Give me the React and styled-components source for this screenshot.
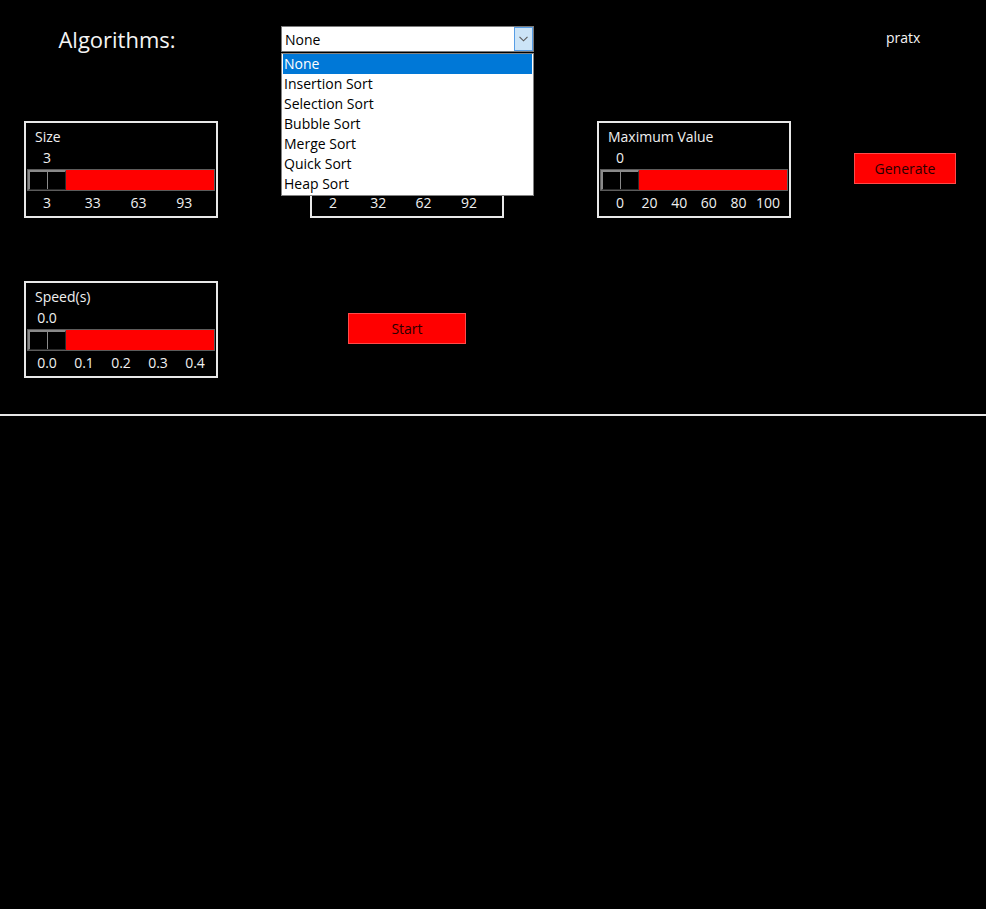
import React from "react";
import styled, { createGlobalStyle } from "styled-components";

const GlobalStyle = createGlobalStyle`
  html, body {
    margin: 0;
    padding: 0;
    background: #000;
  }
  body {
    font-family: "Open Sans", "Noto Sans", sans-serif;
    font-size: 14px;
    color: #f0f0f0;
  }
`;

const algorithms = [
  "None",
  "Insertion Sort",
  "Selection Sort",
  "Bubble Sort",
  "Merge Sort",
  "Quick Sort",
  "Heap Sort",
];

// scale geometry (matches the Tk scale: 38px slider, 186px trough)
const TROUGH_INNER = 186;
const THUMB = 38;
const USABLE = TROUGH_INNER - THUMB;

const posOf = (v, min, max) => THUMB / 2 + ((v - min) / (max - min)) * USABLE;

const Scale = ({ label, min, max, value, ticks, fmt = (v) => v }) => (
  <ScaleFrame>
    <ScaleLabel>{label}</ScaleLabel>
    <ValueRow>
      <Floating style={{ left: posOf(value, min, max) }}>{fmt(value)}</Floating>
    </ValueRow>
    <Trough>
      <Thumb style={{ left: posOf(value, min, max) - THUMB / 2 }} />
    </Trough>
    <TickRow>
      {ticks.map((t) => (
        <Floating key={t} style={{ left: posOf(t, min, max) }}>
          {fmt(t)}
        </Floating>
      ))}
    </TickRow>
  </ScaleFrame>
);

const App = () => {
  return (
    <>
      <GlobalStyle />
      <Page>
        <TopBar>
          <Title>Algorithms:</Title>
          <ComboWrap>
            <Combo>
              <ComboText>None</ComboText>
              <ComboArrow>
                <svg width="9" height="6" viewBox="0 0 9 6">
                  <path d="M0.5 0.8 L4.5 4.8 L8.5 0.8" fill="none" stroke="#5a5a5a" strokeWidth="1.1" />
                </svg>
              </ComboArrow>
            </Combo>
            <DropList>
              {algorithms.map((a, i) => (
                <DropItem key={a} $active={i === 0}>
                  {a}
                </DropItem>
              ))}
            </DropList>
          </ComboWrap>
          <span />
          <User>pratx</User>
        </TopBar>

        <Controls>
          <Scale label="Size" min={3} max={100} value={3} ticks={[3, 33, 63, 93]} />
          <Scale label="Minimum Value" min={2} max={100} value={2} ticks={[2, 32, 62, 92]} />
          <Scale label="Maximum Value" min={0} max={100} value={0} ticks={[0, 20, 40, 60, 80, 100]} />
          <RedButton $offset={38} $width={102}>Generate</RedButton>

          <Scale
            label="Speed(s)"
            min={0}
            max={0.4}
            value={0}
            ticks={[0, 0.1, 0.2, 0.3, 0.4]}
            fmt={(v) => v.toFixed(1)}
          />
          <RedButton $width={118}>Start</RedButton>
        </Controls>

        <Divider />
        <Canvas />
      </Page>
    </>
  );
};

// styles
const Page = styled.div`
  width: 986px;
  height: 909px;
  overflow: hidden;
  background: #000;
  padding-top: 26px;
  box-sizing: border-box;
`;

const TopBar = styled.div`
  display: grid;
  grid-template-columns: 234px 347px 235px 1fr;
  grid-template-rows: 26px;
  align-items: center;
  height: 26px;
  position: relative;
  z-index: 2;
`;

const Title = styled.div`
  justify-self: center;
  font-size: 22px;
  line-height: 26px;
  margin-top: -1px;
  color: #f4f4f4;
`;

const ComboWrap = styled.div`
  position: relative;
  justify-self: center;
  width: 253px;
`;

const Combo = styled.div`
  height: 26px;
  box-sizing: border-box;
  border: 1px solid #7a7a7a;
  background: #fff;
  display: flex;
  align-items: center;
  justify-content: space-between;
`;

const ComboText = styled.span`
  color: #000;
  padding-left: 3px;
  font-size: 14px;
`;

const ComboArrow = styled.div`
  width: 19px;
  height: 24px;
  box-sizing: border-box;
  background: #cce4f7;
  border: 1px solid #569de5;
  display: flex;
  align-items: center;
  justify-content: center;
`;

const DropList = styled.div`
  position: absolute;
  top: 27px;
  left: 0;
  width: 253px;
  box-sizing: border-box;
  border: 1px solid #828282;
  background: #fff;
  padding: 0 1px 1px;
`;

const DropItem = styled.div`
  height: 20px;
  line-height: 20px;
  padding-left: 1px;
  font-size: 14px;
  color: ${(p) => (p.$active ? "#fff" : "#000")};
  background: ${(p) => (p.$active ? "#0078d7" : "transparent")};
  white-space: nowrap;
`;

const User = styled.div`
  justify-self: start;
  padding-left: 70px;
  font-size: 14px;
  line-height: 26px;
  margin-top: -2px;
  color: #f4f4f4;
`;

const Controls = styled.div`
  margin-top: 69px;
  display: grid;
  grid-template-columns: 242px 330px 244px 1fr;
  grid-auto-rows: 97px;
  row-gap: 63px;
  align-items: center;
  justify-items: center;
`;

const ScaleFrame = styled.div`
  width: 194px;
  height: 97px;
  box-sizing: border-box;
  border: 2px solid #e8e8e8;
  padding: 5px 1px 0;
  display: flex;
  flex-direction: column;
`;

const ScaleLabel = styled.div`
  height: 18px;
  line-height: 18px;
  padding-left: 8px;
  font-size: 14px;
  color: #f0f0f0;
  white-space: nowrap;
`;

const ValueRow = styled.div`
  position: relative;
  height: 21px;
  margin: 0 1px;
`;

const Floating = styled.span`
  position: absolute;
  top: 1px;
  transform: translateX(-50%);
  line-height: 21px;
  font-size: 14px;
  color: #f0f0f0;
  white-space: nowrap;
`;

const Trough = styled.div`
  position: relative;
  margin-top: 2px;
  height: 22px;
  box-sizing: border-box;
  border: 1px solid #5c5c5c;
  background: #ff0000;
`;

const Thumb = styled.div`
  position: absolute;
  top: 0;
  width: 38px;
  height: 20px;
  box-sizing: border-box;
  background: #000;
  border-top: 2px solid #8a8a8a;
  border-left: 2px solid #8a8a8a;
  border-right: 1px solid #2a2a2a;
  border-bottom: 1px solid #2a2a2a;

  &::after {
    content: "";
    position: absolute;
    left: 17px;
    top: 0;
    width: 1px;
    height: 17px;
    background: #8a8a8a;
  }
`;

const TickRow = styled.div`
  position: relative;
  height: 22px;
  margin: 0 1px;

  span {
    top: 2px;
    line-height: 20px;
  }
`;

const RedButton = styled.button`
  justify-self: start;
  margin-left: ${(p) => p.$offset || 106}px;
  margin-top: -2px;
  width: ${(p) => p.$width}px;
  height: 31px;
  border: 1px solid #ff4a4a;
  background: #ff0000;
  color: #2a0000;
  font-family: inherit;
  font-size: 14px;
  padding: 0;
  cursor: pointer;
`;

const Divider = styled.div`
  margin-top: 36px;
  height: 2px;
  background: #e6e6e6;
`;

const Canvas = styled.div`
  flex: 1;
`;

export default App;
